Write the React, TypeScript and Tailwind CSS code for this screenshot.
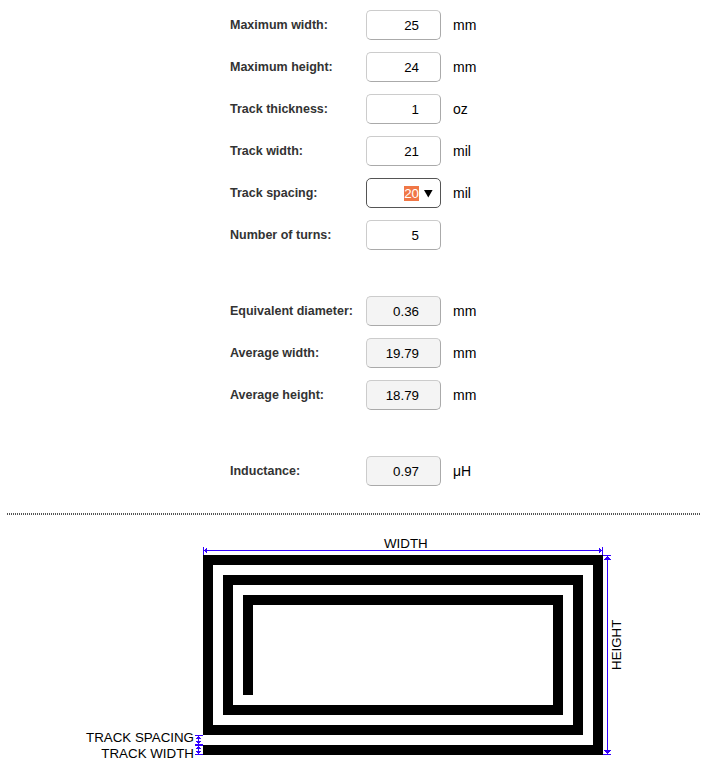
type Field = {
  label: string;
  value: string;
  unit?: string;
  readOnly?: boolean;
  active?: boolean;
};

const inputs: Field[] = [
  { label: "Maximum width:", value: "25", unit: "mm" },
  { label: "Maximum height:", value: "24", unit: "mm" },
  { label: "Track thickness:", value: "1", unit: "oz" },
  { label: "Track width:", value: "21", unit: "mil" },
  { label: "Track spacing:", value: "20", unit: "mil", active: true },
  { label: "Number of turns:", value: "5" },
];

const results: Field[] = [
  { label: "Equivalent diameter:", value: "0.36", unit: "mm", readOnly: true },
  { label: "Average width:", value: "19.79", unit: "mm", readOnly: true },
  { label: "Average height:", value: "18.79", unit: "mm", readOnly: true },
];

const inductance: Field[] = [
  { label: "Inductance:", value: "0.97", unit: "μH", readOnly: true },
];

function FieldRow({ field }: { field: Field }) {
  const border = field.active
    ? "border-[#555]"
    : "border-t-[#ccc] border-l-[#ccc] border-r-[#aaa] border-b-[#aaa]";
  const fill = field.readOnly ? "bg-[#f4f4f4]" : "bg-white";
  return (
    <div className="flex h-[30px] items-center">
      <label className="w-[136px] whitespace-nowrap text-[12.5px] leading-[28px] font-bold text-[#333]">
        {field.label}
      </label>
      <div
        className={`flex h-[30px] w-[75px] items-center justify-end rounded-[5px] border pr-[7px] text-[13.333px] leading-[15px] ${border} ${fill}`}
      >
        <span className={field.active ? "bg-[#f07746] text-white" : "mr-[14px]"}>{field.value}</span>
        {field.active && (
          <svg className="mt-px ml-[5px]" width="9" height="8" viewBox="0 0 9 8">
            <path d="M0 0H8.6L4.3 7.5Z" fill="#000" />
          </svg>
        )}
      </div>
      <span className="ml-3 text-sm leading-[28px] text-black">{field.unit}</span>
    </div>
  );
}

function Group({ fields }: { fields: Field[] }) {
  return (
    <div className="flex flex-col gap-3">
      {fields.map((f) => (
        <FieldRow key={f.label} field={f} />
      ))}
    </div>
  );
}

function CoilDiagram() {
  return (
    <svg
      className="block"
      width="704"
      height="238"
      viewBox="0 530 704 238"
      fontFamily="'Liberation Sans', Arial, sans-serif"
      fontSize="13.35"
    >
      <path
        d="M203 750H598V560H208V730H578V580H228V710H558V600H248V695"
        fill="none"
        stroke="#000"
        strokeWidth="10"
      />
      <g fill="#3300ff" shapeRendering="crispEdges">
        <path d="M203 550h400v1h-400zM203 547h1v8h-1zM602 547h1v8h-1z" />
        <path d="M204 550h1v1h-1zM205 549h1v3h-1zM206 548h1v5h-1zM600 549h1v3h-1zM599 548h1v5h-1z" />
        <path d="M607 555h1v200h-1zM603 555h8v1h-8zM603 754h8v1h-8z" />
        <path d="M606 557h3v1h-3zM605 558h5v1h-5zM604 559h7v1h-7zM606 752h3v1h-3zM605 751h5v1h-5zM604 750h7v1h-7z" />
        <path d="M195 735h8v1h-8zM195 744h8v2h-8zM195 754h8v1h-8zM198 735h1v20h-1z" />
        <path d="M197 737h3v1h-3zM196 738h5v1h-5zM197 742h3v1h-3zM196 741h5v1h-5zM197 747h3v1h-3zM196 748h5v1h-5zM197 752h3v1h-3zM196 751h5v1h-5z" />
      </g>
      <text x="384" y="548">WIDTH</text>
      <text transform="translate(621 670) rotate(-90)">HEIGHT</text>
      <text x="194" y="742" textAnchor="end">TRACK SPACING</text>
      <text x="194" y="758" textAnchor="end">TRACK WIDTH</text>
    </svg>
  );
}

export default function App() {
  return (
    <main className="h-[778px] w-[704px] overflow-hidden bg-white pt-[10px] font-['Liberation_Sans',Arial,sans-serif] text-black">
      <section className="flex flex-col gap-[46px] pl-[230px]">
        <Group fields={inputs} />
        <Group fields={results} />
        <Group fields={inductance} />
      </section>
      <hr className="mt-[27px] mr-1 mb-[15px] ml-[7px] h-[2px] border-y border-dotted border-[#555]" />
      <CoilDiagram />
    </main>
  );
}
